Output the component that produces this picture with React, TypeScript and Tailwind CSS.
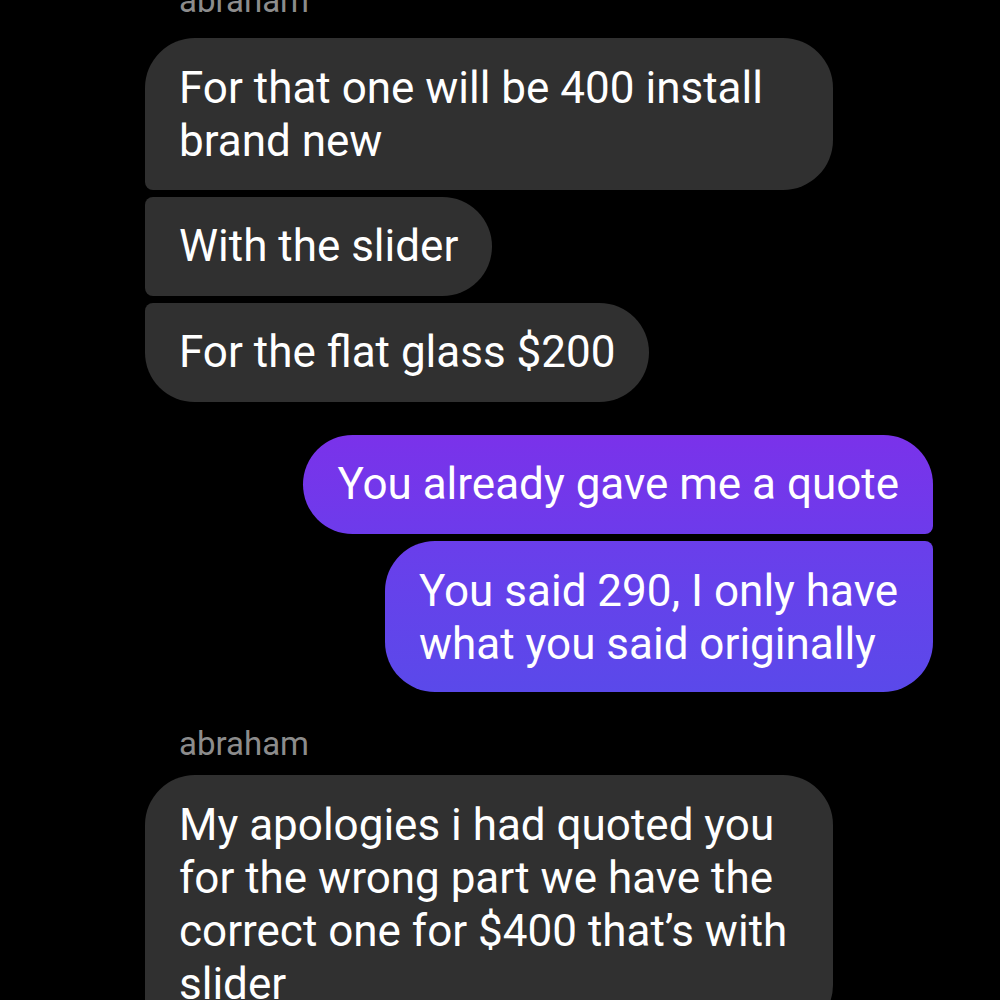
import React from "react";

const font = { fontFamily: "Roboto, 'Noto Sans', sans-serif" };

export default function App() {
  return (
    <div className="w-[1000px] h-[1000px] bg-black overflow-hidden text-white" style={font}>
      <div className="flex flex-col pl-[145px] pr-[67px] -mt-[18px]">
        <div className="pl-[34px] text-[33px] leading-[38px] text-[#8c8c8c]">abraham</div>
        <div className="flex flex-col items-start gap-[7px] mt-[18px]">
          <div className="w-[688px] bg-[#303030] rounded-[50px] rounded-bl-[8px] pl-[34px] pr-[30px] pt-[24px] pb-[22px] text-[44px] leading-[53px]">
            For that one will be 400 install brand new
          </div>
          <div className="bg-[#303030] rounded-[50px] rounded-tl-[8px] rounded-bl-[8px] pl-[34px] pr-[34px] pt-[23px] pb-[23px] text-[44px] leading-[53px]">
            With the slider
          </div>
          <div className="bg-[#303030] rounded-[50px] rounded-tl-[8px] pl-[34px] pr-[34px] pt-[23px] pb-[23px] text-[44px] leading-[53px]">
            For the flat glass $200
          </div>
        </div>
        <div className="flex flex-col items-end gap-[7px] mt-[33px]">
          <div className="bg-gradient-to-b from-[#7a32ea] to-[#6d3beb] rounded-[50px] rounded-br-[8px] pl-[34px] pr-[34px] pt-[23px] pb-[23px] text-[44px] leading-[53px]">
            You already gave me a quote
          </div>
          <div className="w-[548px] bg-gradient-to-b from-[#6a3eeb] to-[#5a49ea] rounded-[50px] rounded-tr-[8px] pl-[34px] pr-[28px] pt-[24px] pb-[21px] text-[44px] leading-[53px]">
            You said 290, I only have what you said originally
          </div>
        </div>
        <div className="pl-[34px] mt-[33px] text-[33px] leading-[38px] text-[#8c8c8c]">abraham</div>
        <div className="flex flex-col items-start mt-[12px]">
          <div className="w-[688px] bg-[#303030] rounded-[50px] rounded-bl-[8px] pl-[34px] pr-[28px] pt-[24px] pb-[24px] text-[44px] leading-[53px]">
            My apologies i had quoted you for the wrong part we have the correct one for $400 that’s with slider
          </div>
        </div>
      </div>
    </div>
  );
}
